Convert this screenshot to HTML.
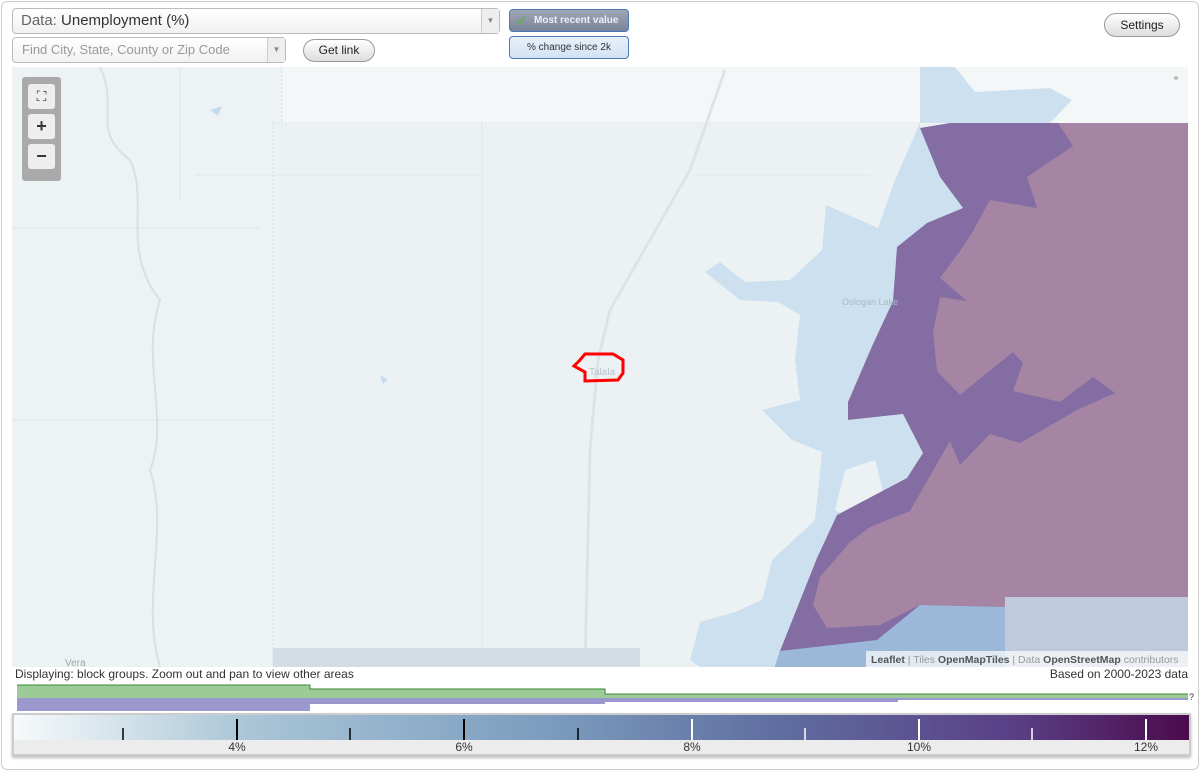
<!DOCTYPE html>
<html><head><meta charset="utf-8"><style>
*{box-sizing:border-box}
body{margin:0;width:1200px;height:771px;overflow:hidden;background:#fff;font-family:"Liberation Sans",sans-serif;font-size:12px;color:#333;position:relative}
.frame{position:absolute;left:1px;top:1px;width:1198px;height:769px;border:1px solid #ccc;border-radius:6px}
.sel{position:absolute;border:1px solid #bbb;border-radius:4px;background:linear-gradient(#fff,#f1f1f1);}
.sel .arr{position:absolute;right:0;top:0;bottom:0;width:18px;border-left:1px solid #ccc;background:#eee;color:#888;font-size:8px;text-align:center;line-height:23px}
.pill{position:absolute;border:1px solid #999;border-radius:12px;background:linear-gradient(#fff,#ddd);text-align:center;font-size:12px;color:#222}
.abs{position:absolute}
</style></head><body>
<div class="frame"></div>
<div class="sel" style="left:12px;top:8px;width:488px;height:26px;font-size:15px;line-height:24px;padding-left:8px;color:#666">Data: <span style="color:#333">Unemployment (%)</span><div class="arr" style="line-height:24px">▼</div></div>
<div class="sel" style="left:12px;top:37px;width:274px;height:26px;font-size:13px;line-height:24px;padding-left:9px;color:#999">Find City, State, County or Zip Code<div class="arr" style="line-height:24px">▼</div></div>
<div class="pill" style="left:303px;top:39px;width:72px;height:23px;line-height:21px">Get link</div>
<div class="abs" style="left:509px;top:9px;width:120px;height:23px;border:1px solid #4a7ab8;border-radius:4px;background:linear-gradient(#a0a6b6,#7b8399);color:#eef;font-weight:bold;font-size:10px;line-height:21px;padding-left:24px">Most recent value<span style="position:absolute;left:6px;top:0;color:#6a6;font-size:13px">✔</span></div>
<div class="abs" style="left:509px;top:36px;width:120px;height:23px;border:1px solid #4a7ab8;border-radius:4px;background:linear-gradient(#e8f0fa,#d3e2f3);color:#333;font-size:10px;line-height:21px;text-align:center">% change since 2k</div>
<div class="pill" style="left:1104px;top:13px;width:76px;height:24px;line-height:22px">Settings</div>

<svg class="abs" style="left:12px;top:67px" width="1176" height="600" viewBox="12 67 1176 600">
<rect x="12" y="67" width="1176" height="600" fill="#f3f7f8"/>
<rect x="273" y="123" width="915" height="544" fill="#ecf2f4"/>
<rect x="12" y="67" width="270" height="600" fill="#edf2f5"/>
<path d="M273 123H920M282 67V123M273 123V667" stroke="#d8dfe3" stroke-dasharray="2,2" fill="none"/>
<path d="M482 123V667M12 228H260M180 67V200M12 420H273M195 175H480M695 175H870" stroke="#dfe6ea" fill="none"/>
<path d="M100 67C120 110 90 130 130 160 150 200 120 250 160 300 140 360 170 420 150 470 170 530 140 600 160 667" stroke="#d6e0e5" stroke-width="2" fill="none"/>
<path d="M725 70L690 170 610 310 598 360 590 450 585 666" stroke="#dde3e7" stroke-width="3" fill="none"/>
<path d="M920 67L955 67 975 92 1050 88 1072 100 1050 123 920 123 895 180 878 228 826 205 822 250 790 280 745 282 720 262 705 272 740 300 778 302 800 315 795 360 800 400 762 410 792 440 822 452 815 520 772 560 762 600 735 612 700 622 690 660 700 667 780 667 780 651 817 558 837 515 907 478 923 453 903 414 848 420 848 402 873 344 893 301 897 247 927 223 963 208 940 177 920 128Z" fill="#cde0ef"/>
<path d="M845 470L875 460 885 500 855 520 835 510Z" fill="#ecf2f4"/>
<path d="M920 128L950 123 1188 123 1188 667 775 667 780 651 817 558 837 515 907 478 923 453 903 414 848 420 848 402 873 344 893 301 897 247 927 223 963 208 940 177Z" fill="#836da3"/>
<path d="M1058 123L1188 123 1188 598 1005 598 1005 607 920 605 880 625 827 628 813 605 820 577 850 542 870 527 910 511 950 441 960 465 990 434 1020 443 1077 410 1115 393 1093 377 1060 402 1013 391 1023 363 1013 352 960 395 937 371 933 332 940 297 967 301 940 278 960 251 973 231 990 200 1037 208 1027 177 1073 146Z" fill="#a584a4"/>
<rect x="1005" y="597" width="183" height="70" fill="#bfcbdc"/>
<path d="M780 651L877 640 920 605 1005 607 1005 667 775 667Z" fill="#9cb8d8"/>
<rect x="273" y="648" width="367" height="19" fill="#d3dde6"/>
<path d="M380 375l8 5-5 4z M210 110l12-4-4 10z" fill="#c5dcee"/>
<path d="M574 366L580 360 585 354 601 354 613 354 623 360 623 373 618 380 585 381 585 372Z" fill="none" stroke="#f00" stroke-width="3"/>
<text x="589" y="375" font-size="10" fill="#b8c4cc">Talala</text>
<text x="842" y="305" font-size="9" fill="#a9b9c6">Oologah Lake</text>
<text x="65" y="666" font-size="10" fill="#9aa">Vera</text>
<circle cx="1176" cy="78" r="2" fill="#bbb"/>
<rect x="866" y="651" width="322" height="16" fill="rgba(255,255,255,0.7)"/>
<text x="871" y="663" font-size="10.5" fill="#999"><tspan fill="#555" font-weight="bold">Leaflet</tspan> | Tiles <tspan fill="#555" font-weight="bold">OpenMapTiles</tspan> | Data <tspan fill="#555" font-weight="bold">OpenStreetMap</tspan> contributors</text>
</svg>
<div class="abs" style="left:22px;top:77px;width:39px;height:104px;background:#aaa;border-radius:3px"></div>
<div class="abs" style="left:28px;top:84px;width:27px;height:25px;background:#eee;border-radius:3px;text-align:center;line-height:25px;font-size:14px">⛶</div>
<div class="abs" style="left:28px;top:114px;width:27px;height:25px;background:#eee;border-radius:3px;text-align:center;line-height:25px;font-size:18px;font-weight:bold">+</div>
<div class="abs" style="left:28px;top:144px;width:27px;height:25px;background:#eee;border-radius:3px;text-align:center;line-height:24px;font-size:18px;font-weight:bold">−</div>

<div class="abs" style="left:15px;top:667px;font-size:12px;color:#333">Displaying: block groups. Zoom out and pan to view other areas</div>
<div class="abs" style="right:12px;top:667px;font-size:12px;color:#333">Based on 2000-2023 data</div>
<svg class="abs" style="left:0;top:680px" width="1200" height="35">
<path d="M17 5H310V9H605V14H1188V18H17Z" fill="#9ccb98"/>
<path d="M17 5H310V9H605V14H1188" stroke="#3a8a35" fill="none"/>
<path d="M17 18H1188V20H898V22H605V24H310V31H17Z" fill="#9a98cc"/>
<text x="1189" y="20" font-size="9" fill="#333">?</text>
</svg>
<div class="abs" style="left:12px;top:713px;width:1179px;height:43px;border:2px solid #ccc;box-shadow:0 2px 3px #bbb;background:#ececec">
<div style="height:25px;background:linear-gradient(to right,#f7fafb,#a9c5d6 20%,#7d9dbf 45%,#5f6ea0 65%,#5a3f86 85%,#4b0b4c)"></div>
</div>
<svg class="abs" style="left:0;top:713px" width="1200" height="44">
<g stroke-width="1.5"><path d="M123 15V27M350 15V27M578 15V27" stroke="#000"/><path d="M805 15V27M1032 15V27" stroke="#fff"/>
<path d="M237 6V27M464 6V27" stroke="#000" stroke-width="2"/><path d="M692 6V27M919 6V27M1146 6V27" stroke="#fff" stroke-width="2"/></g>
<g font-size="12" fill="#333" text-anchor="middle"><text x="237" y="38">4%</text><text x="464" y="38">6%</text><text x="692" y="38">8%</text><text x="919" y="38">10%</text><text x="1146" y="38">12%</text></g>
</svg>
</body></html>
